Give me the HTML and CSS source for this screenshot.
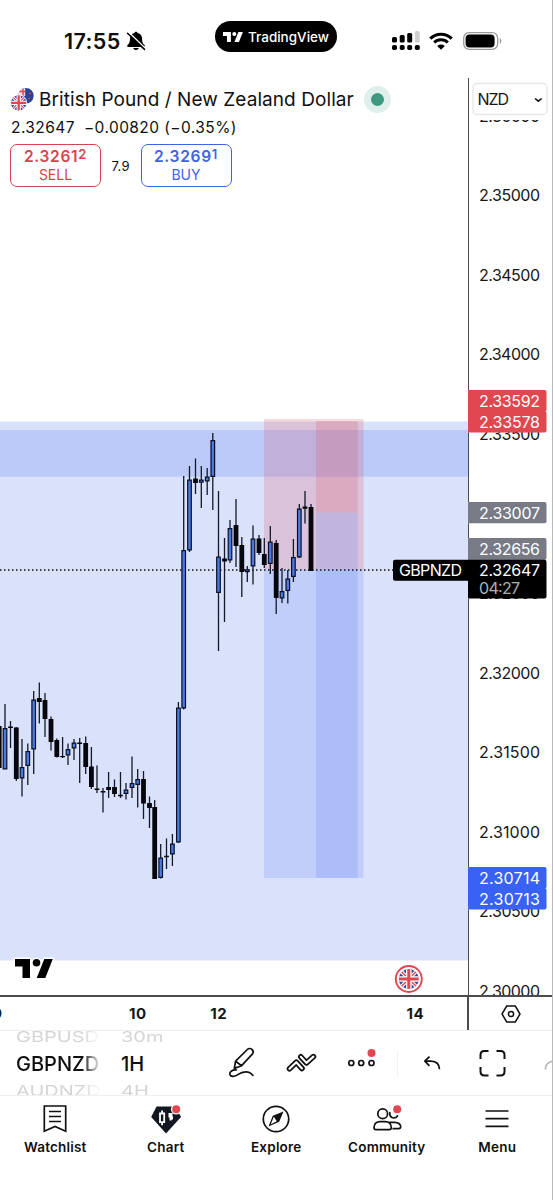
FILE: index.html
```html
<!DOCTYPE html>
<html lang="en">
<head>
<meta charset="utf-8">
<title>GBPNZD chart</title>
<link rel="stylesheet" href="styles.css">
</head>
<body>
<svg class="defs" width="0" height="0">
  <symbol id="uk" viewBox="0 0 20 20">
    <clipPath id="disc"><circle cx="10" cy="10" r="10"/></clipPath>
    <g clip-path="url(#disc)">
      <path fill="#2d4aa5" d="M0 0h20v20H0z"/>
      <path stroke="#fff" stroke-width="3.6" d="M0 0l20 20M20 0L0 20"/>
      <path stroke="#e0474f" stroke-width="1.4" d="M0 0l20 20M20 0L0 20"/>
      <path stroke="#fff" stroke-width="5.6" d="M10 0v20M0 10h20"/>
      <path stroke="#e0474f" stroke-width="3" d="M10 0v20M0 10h20"/>
    </g>
  </symbol>
  <symbol id="tv" viewBox="0 0 38 19">
    <path d="M0 0h15v19H7.5V7.5H0z"/><circle cx="21.500" cy="3.800" r="3.800"/><path d="M29.300 0H37.800l-7.500 19h-8.600z"/>
  </symbol>
</svg>
<div class="screen">
  <header class="status">
    <div class="clock">
      <span class="time">17:55</span>
      <svg width="20" height="20" viewBox="0 0 20 20"><path d="M10 .8c-.9 0-1.500.6-1.600 1.300C5.500 2.800 3.900 5 3.900 8c0 3.500-.8 4.500-2.400 6-.6.700-.3 1.900.7 1.900h15.600c1 0 1.300-1.200.7-1.900-1.600-1.500-2.400-2.500-2.400-6 0-3-1.600-5.200-4.500-5.900C11.500 1.400 10.900.8 10 .8zM7.200 17h5.600c-.3 1.200-1.400 2-2.800 2s-2.500-.8-2.800-2z"/><path stroke="#fff" stroke-width="1.400" d="M3 1.500l16 15.500"/><path stroke="#000" stroke-width="1.500" stroke-linecap="round" d="M1.500 2.200l17 16.200"/></svg>
    </div>
    <div class="pill"><svg width="20" height="10"  fill="#fff"><use href="#tv"/></svg><span>TradingView</span></div>
    <div class="signals">
      <svg width="28" height="20" viewBox="0 0 28 20"><g fill="#000"><rect y="6" width="5" height="5.500" rx="1.500"/><rect x="7.700" y="4" width="5" height="7.500" rx="1.500"/><rect x="15.200" y="2" width="5" height="9.500" rx="1.500"/><rect y="14" width="5" height="5" rx="1.700"/><rect x="7.700" y="14" width="5" height="5" rx="1.700"/><rect x="15.200" y="14" width="5" height="5" rx="1.700"/><rect x="22.800" y="14" width="5" height="5" rx="1.700"/></g><rect x="22.800" width="5" height="11.500" rx="1.500" fill="#cfcfcf"/></svg>
      <svg class="wifi" width="24" height="18" viewBox="0 0 24 18" fill="none" stroke="#000" stroke-width="3.100"><path d="M1.300 6.600a15.200 15.200 0 0 1 21.400 0M5.200 10.500a9.700 9.700 0 0 1 13.600 0"/><path stroke="none" fill="#000" d="M8.200 14a5.600 5.600 0 0 1 7.600 0L12 17.800z"/></svg>
      <svg width="39" height="18" viewBox="0 0 39 18"><rect x=".7" y=".7" width="34" height="16.600" rx="5.500" fill="none" stroke="#999" stroke-width="1.300"/><rect x="2.600" y="2.600" width="29" height="12.800" rx="4"/><path fill="#999" d="M36.800 6c2 .8 2 5.200 0 6z"/></svg>
    </div>
  </header>

  <main class="chart">
    <section class="plot">
      <svg width="468" height="917" viewBox="0 78 468 917">
        <rect class="zone" y="421.500" width="468" height="539"/>
        <rect class="band" y="430" width="468" height="46.700"/>
        <rect class="risk" x="264" y="419" width="99.500" height="150.500"/>
        <rect class="gain" x="264" y="569.500" width="99.500" height="308.500"/>
        <rect class="risk" x="316" y="421" width="41.700" height="91.500"/>
        <rect class="gain" x="316" y="512.500" width="41.700" height="365.500"/>
        <path class="last" d="M0 570H394"/>
        <path class="wick" d="M5 704V769M10.500 721V748M16.300 727V781M22 739V796.500M27.800 743.500V785M33.700 691V774M39.300 682.500V723.500M45 693V737M51 716.500V750.500M56.800 738.500V757.500M62.600 737V758M68 743.500V765M74 739V760M79.700 738V783M85.700 736.500V774M91.400 747V789M97 765.500V793M103 788V812.500M108.600 772V798M114.500 779.500V797M120.500 772V798M126 783V799.500M132 756.500V798M137.700 769V807.500M143.500 771V819M149.500 796.500V828M154.700 800V879M160.700 844V878.500M166.500 838.500V869M172.400 834V866M178.400 702V843M183.700 476V709.500M189.500 466V552M195.500 458.500V494M201.300 466V508M207.200 468V495M212.800 433V510M218.500 491V651M224.500 538V622M230 520V563M236 499V567M241.800 537V597M247.300 566V582M253 525.500V584.500M259 535V555M264.300 538V568M270.300 526V574M276.200 540V614M282 568V603M287.800 570V603.500M293.400 539V582M299.300 504V558M305 491V523.500M311 504V571"/>
        <path class="down" d="M-.8 726V768M16.300 727.500V779M39.300 698V702M45 700V719M51 719V742M56.800 740V757M85.700 743V767M91.400 766.500V787M108.600 787V790M114.500 787V794M143.500 779V803.500M149.500 803V808M154.700 807V879M195.500 478.500V483M224.500 558.500V561.500M236 525V546M241.800 545V572M259 538.500V553M264.300 554V565M276.200 543V598M305 506.500V508.700M311 507V571M10.500 726.600V728M62.600 756V757.200M79.700 742.500V743.900M97 788.500V789.900M103 791V792.400M120.500 794.800V796.200M166.500 855.800V857.200"/>
        <path class="up" d="M3.200 728.600h3.600v40.300h-3.600zM20.200 767.600h3.600v10.300h-3.600zM26 751.600h3.600v13.800H26zM31.900 700.100h3.600v48.800h-3.600zM66.200 749.600h3.600v5.300h-3.600zM72.200 743.100h3.600v4.800h-3.600zM124.200 790.100h3.600v3.300h-3.600zM130.200 783.600h3.600v3.800h-3.600zM135.900 779.600h3.600v4.800h-3.600zM158.900 858.100h3.600v19.300h-3.600zM170.600 844.100h3.600v9.800h-3.600zM176.600 708.100h3.600v133.800h-3.600zM181.900 550.600h3.600v157.300h-3.600zM187.700 480.100h3.600v69.800h-3.600zM199.500 480.100h3.600v2h-3.600zM205.400 477.100h3.600v3.800h-3.600zM211 440.600h3.600v35.800H211zM216.700 557.100h3.600v35.300h-3.600zM228.200 528.600h3.600v31.300h-3.600zM245.500 569.800h3.600v1.800h-3.600zM251.200 539.100h3.600v26.800h-3.600zM268.500 542.100h3.600v21.300h-3.600zM280.200 591.600h3.600v6.300h-3.600zM286 579.100h3.600v11.300H286zM291.600 557.600h3.600v18.800h-3.600zM297.500 509.100h3.600v47.800h-3.600z"/>
        <path fill="#000" d="M468 559.700H395a2 2 0 0 0-2 2v17a2 2 0 0 0 2 2h73z"/>
        <text class="light" x="399" y="576" textLength="63">GBPNZD</text>
        <g transform="translate(15 959)" stroke="#fff" stroke-width="3" paint-order="stroke"><path d="M0 0h15v19H7.500V7.500H0z"/><path d="M29.300 0H37.800l-7.500 19h-8.600z"/><circle cx="21.500" cy="3.800" r="3.800"/></g>
        <circle cx="408.800" cy="979" r="13" fill="#fff" stroke="#e0474f" stroke-width="1.900"/>
        <use href="#uk" x="398.800" y="969" width="20" height="20"/>
      </svg>
      <div class="legend">
        <h1 class="pair">
          <svg width="24" height="23" viewBox="0 0 24 23"><circle cx="16" cy="7.700" r="7.700" fill="#2d4493"/><path fill="#f4d9de" d="M8.300 8.500A7.700 7.700 0 0 1 15.200.1V8z"/><path stroke="#e0474f" stroke-width="1.500" d="M9.500 3.500h5.500M13 .8v7"/><circle cx="20" cy="5.500" r=".9" fill="#e0474f"/><circle cx="19" cy="10.500" r=".8" fill="#e0474f"/><circle cx="8.700" cy="14.900" r="8.400" fill="#fff"/><use href="#uk" x="1" y="7.200" width="15.400" height="15.400"/></svg>
          <span class="name">British Pound / New Zealand Dollar</span>
          <i class="live"></i>
        </h1>
        <p class="change"><span>2.32647</span><span>−0.00820 (−0.35%)</span></p>
        <div class="trade">
          <button class="quote sell"><b>2.3261<sup>2</sup></b><span>SELL</span></button>
          <span class="spread">7.9</span>
          <button class="quote buy"><b>2.3269<sup>1</sup></b><span>BUY</span></button>
        </div>
      </div>
    </section>
    <section class="prices">
      <svg width="85" height="917" viewBox="468 78 85 917">
        <text x="479" y="121.700" textLength="61">2.35500</text>
        <path fill="#fff" d="M470 100h80v20h-80z"/>
        <rect x="473" y="83.500" width="74" height="31" rx="4" fill="#fff" stroke="#e6e7ea" stroke-width="1.300"/>
        <text x="477.500" y="104.500" textLength="31.500">NZD</text>
        <path d="M535 98.500l3.300 2.700 3.300-2.700" fill="none" stroke="#111" stroke-width="1.600"/>
        <text x="479" y="201.300" textLength="61">2.35000</text>
        <text x="479" y="280.800" textLength="61">2.34500</text>
        <text x="479" y="360.300" textLength="61">2.34000</text>
        <text x="479" y="439.800" textLength="61">2.33500</text>
        <text x="479" y="599" textLength="61">2.32500</text>
        <text x="479" y="678.700" textLength="61">2.32000</text>
        <text x="479" y="758.300" textLength="61">2.31500</text>
        <text x="479" y="837.800" textLength="61">2.31000</text>
        <text x="479" y="917" textLength="61">2.30500</text>
        <text x="479" y="996.500" textLength="61">2.30000</text>
        <g fill="#e0474f"><rect x="467" y="390" width="79.500" height="21.500" rx="2"/><rect x="467" y="411" width="79.500" height="21.500" rx="2"/></g>
        <g fill="#787b86"><rect x="467" y="502" width="79.500" height="21.300" rx="2"/><rect x="467" y="538" width="79.500" height="22" rx="2"/></g>
        <rect x="467" y="559.700" width="79.500" height="38.800" rx="2" fill="#000"/>
        <g fill="#3861f6"><rect x="467" y="867" width="79.500" height="21.500" rx="2"/><rect x="467" y="888" width="79.500" height="21.500" rx="2"/></g>
        <g class="light">
          <text x="479" y="406.700" textLength="61">2.33592</text>
          <text x="479" y="428" textLength="61">2.33578</text>
          <text x="479" y="518.800" textLength="61">2.33007</text>
          <text x="479" y="555" textLength="61">2.32656</text>
          <text x="479" y="576" textLength="61">2.32647</text>
          <text x="479" y="593.700" textLength="41" fill-opacity=".7">04:27</text>
          <text x="479" y="883.700" textLength="61">2.30714</text>
          <text x="479" y="904.900" textLength="61">2.30713</text>
        </g>
        <path class="edge" d="M468 78V390M468 432.500V502M468 523.300V538M468 598.500V867M468 909.500V995"/>
      </svg>
    </section>
  </main>

  <section class="timeline">
    <svg width="467" height="33" viewBox="0 997 467 33">
      <g class="date"><text x="-2.500" y="1019">9</text><text x="137.800" y="1019">10</text><text x="218.700" y="1019">12</text><text x="415.300" y="1019">14</text></g>
    </svg>
    <div class="axis-settings"><svg width="20" height="18" viewBox="0 0 20 18" fill="none" stroke="#111" stroke-width="1.500"><path d="M5.700 1h8.600L19 9l-4.700 8H5.700L1 9z"/><circle cx="10" cy="9" r="2.600"/></svg></div>
  </section>

  <section class="toolbar">
    <div class="wheel symbol"><span class="far">GBPUSD</span><span class="now">GBPNZD</span><span class="far">AUDNZD</span></div>
    <div class="wheel interval"><span class="far">30m</span><span class="now">1H</span><span class="far">4H</span></div>
    <svg class="tools" width="329" height="65" viewBox="224 1031 329 65" fill="none" stroke="#111" stroke-width="1.700" stroke-linecap="round" stroke-linejoin="round">
      <path d="M234.300 1068.500l1.300-7.300 11.700-11.700a3.300 3.300 0 0 1 4.700 0 3.300 3.300 0 0 1 .3 4.600l-10.700 11.600zM235.600 1061.200l6 4.500M234.300 1068.500l2.500-1.200"/>
      <path d="M236.500 1070c-4.500-.3-7.500 2.200-6.600 4.600.8 2.200 4.300 2.200 7 .5 5.500-3.500 12-5 16 .3"/>
      <g stroke-width="5.600"><path d="M289.500 1068.800l6.800-6.600 5.700 6.300"/><path d="M300.800 1056.800l5.600 6.100 7-6.300"/></g>
      <g stroke="#fff" stroke-width="2.100"><path d="M289.500 1068.800l6.800-6.600 5.700 6.300"/><path d="M300.800 1056.800l5.600 6.100 7-6.300"/></g>
      <circle cx="351.300" cy="1063" r="2.500"/><circle cx="361.200" cy="1063" r="2.500"/><circle cx="371.500" cy="1063" r="2.500"/>
      <circle cx="371.500" cy="1053" r="4" fill="#e0474f" stroke="none"/>
      <path stroke="#f0f1f3" stroke-width="1" d="M397.500 1052v24"/>
      <path stroke-linecap="butt" d="M429.500 1056.700l-4.700 4.500 4.700 4.600M425 1061.200h6q8.200.3 8.500 8"/>
      <path stroke-width="2" stroke-linecap="butt" d="M480.500 1059v-4q0-4 4-4h4M496.500 1051h4q4 0 4 4v4M504.500 1067v4.500q0 4-4 4h-4M488.500 1075.500h-4q-4 0-4-4V1067"/>
      <path stroke="#b5b5b5" d="M545.500 1069q0-6 6-7.500"/>
    </svg>
  </section>

  <nav class="tabs">
    <a><svg width="30" height="30" viewBox="0 0 30 30" fill="none" stroke="#111" stroke-width="1.700"><path d="M4.300 2h21.400v25.300L15 22.500 4.300 27.300zM9 7.500h12M9 12.500h12M9 17.500h12"/></svg>Watchlist</a>
    <a><svg width="30" height="30" viewBox="0 0 30 30"><path fill="#131722" d="M5.500 2.500h19L30 13 15 29.500.2 13z"/><path fill="none" stroke="#fff" stroke-width="1.800" d="M9 9.500h4.200v8.600H9zM11.100 6.500v3M11.100 18v3.200"/><path fill="#fff" d="M17.500 9h4v3.500H22v3h-1.500v1h-2v-3h-1z"/><circle cx="25.200" cy="5.300" r="5.300" fill="#fff"/><circle cx="25.200" cy="5.300" r="4" fill="#e0474f"/></svg>Chart</a>
    <a><svg width="30" height="30" viewBox="0 0 30 30"><circle cx="15" cy="15" r="12.700" fill="none" stroke="#111" stroke-width="1.700"/><path fill="#111" fill-rule="evenodd" d="M22.500 7.500l-4.300 10.200L7.500 22.500l4.300-10.700zM12.800 12.800L9.800 20.200l6-3z"/></svg>Explore</a>
    <a><svg width="30" height="30" viewBox="0 0 30 30" fill="none" stroke="#111" stroke-width="1.700" stroke-linecap="round"><circle cx="10.700" cy="9.700" r="4.900"/><path d="M17.800 8.500q-.5 5 4 5.500 2.300 0 3.700-2M2 23.500q.3-5.800 6.200-5.800h5q5.800 0 6.100 5.800 0 2.200-2 2.200H4q-2 0-2-2.200zM17.300 18.300h5.200q5.700.2 6.200 4.200 0 2.200-2 2.200h-5.500"/><circle cx="25.200" cy="5.300" r="4" fill="#e0474f" stroke="none"/></svg>Community</a>
    <a><svg width="30" height="30" viewBox="0 0 30 30" stroke="#111" stroke-width="1.700"><path d="M3.500 7h23M3.500 14.700h23M3.500 22.300h23"/></svg>Menu</a>
  </nav>
</div>
</body>
</html>
```
FILE: styles.css
```css
* { box-sizing: border-box; }
body { margin: 0; background: #fff; color: #0f0f0f; font-family: Inter, "Liberation Sans", sans-serif; }
.defs { position: absolute; }
.screen { width: 553px; height: 1200px; overflow: hidden; border-right: 1px solid #b9b9b9; display: flex; flex-direction: column; }
svg { display: block; flex: none; }

.status { height: 78px; flex: none; display: flex; align-items: flex-start; padding: 21px 0 0 64px; }
.clock { display: flex; align-items: center; gap: 4px; width: 151px; height: 40px; }
.time { font-size: 21.500px; font-weight: 600; width: 58px; white-space: nowrap; letter-spacing: .4px; }
.pill { display: flex; align-items: center; gap: 5px; width: 122px; height: 31px; border-radius: 16px; background: #000; color: #fff; padding-left: 8px; font-size: 13.500px; font-weight: 500; white-space: nowrap; }
.signals { display: flex; align-items: center; gap: 9px; height: 39px; margin-left: 55px; }
.wifi { margin-right: 1px; }

.chart { display: flex; width: 553px; height: 917px; flex: none; }
.plot { position: relative; width: 468px; }
.prices { width: 85px; }
.chart text, .timeline text { font-size: 16px; fill: #161616; }
.chart .light, .chart .light text { fill: #fff; }
.zone { fill: #dae2fb; }
.band { fill: #bccafa; }
.risk { fill: #d8404e; fill-opacity: .19; }
.gain { fill: #3961f7; fill-opacity: .15; }
.last { stroke: #111; stroke-width: 1.300; stroke-dasharray: 1.500 2.500; }
.wick { stroke: #111a26; stroke-width: 1.300; }
.down { stroke: #05070c; stroke-width: 4.800; }
.up { fill: #4a79e2; stroke: #0a1026; stroke-width: 1.200; }
.edge { stroke: #4c4c50; stroke-width: 2; }

.legend { position: absolute; top: 8px; left: 10px; }
.pair { display: flex; align-items: center; margin: 0; height: 27px; font-size: 19px; font-weight: 400; }
.name { margin-left: 5px; width: 315px; white-space: nowrap; letter-spacing: .07px; }
.live { width: 27px; height: 27px; margin-left: 10px; border-radius: 50%; background: #419881; border: 7.500px solid #dff0ec; }
.change { display: flex; gap: 9px; margin: 5px 0 0 1px; line-height: 20px; font-size: 15.500px; letter-spacing: .43px; white-space: nowrap; }
.trade { display: flex; align-items: center; margin-top: 6px; }
.quote { display: flex; flex-direction: column; align-items: center; width: 91px; height: 43px; padding: 3px 0 0; border: 1.500px solid; border-radius: 7px; background: #fff; font-family: inherit; font-size: 14px; line-height: 18px; }
.quote b { font-size: 15.500px; font-weight: 600; letter-spacing: .7px; white-space: nowrap; }
.quote sup { font-size: 13px; line-height: 0; vertical-align: 3px; }
.sell { color: #d64550; }
.buy { color: #3d64e6; }
.spread { width: 39.500px; text-align: center; font-size: 13px; letter-spacing: .4px; }

.timeline { display: flex; flex: none; width: 553px; height: 36px; border-top: 2px solid #4c4c50; border-bottom: 1px solid #eff0f2; }
.timeline .date text { font-size: 15px; font-weight: 700; text-anchor: middle; letter-spacing: .6px; }
.axis-settings { width: 86px; border-left: 2px solid #4c4c50; display: flex; align-items: center; padding-left: 32px; }

.toolbar { display: flex; flex: none; width: 553px; height: 65px; padding-left: 16px; border-bottom: 1px solid #eff0f2; }
.wheel { display: flex; flex-direction: column; justify-content: space-between; overflow: hidden; white-space: nowrap; padding-top: 1px; font-size: 20px; line-height: 20px; }
.symbol { width: 84px; margin-right: 21px; -webkit-mask-image: linear-gradient(90deg, #000 78%, transparent 102%); mask-image: linear-gradient(90deg, #000 78%, transparent 102%); }
.interval { width: 103px; }
.far { color: #d5d5d7; transform: scaleY(.72); margin: -5px 0; }
.far:last-child { margin-bottom: -6px; }
.now { font-weight: 500; }

.tabs { display: grid; grid-template-columns: repeat(5, 110.500px); flex: none; height: 104px; padding-top: 8px; }
.tabs a { display: flex; flex-direction: column; align-items: center; gap: 5px; font-size: 13.500px; font-weight: 600; line-height: 17px; letter-spacing: .2px; }
```
